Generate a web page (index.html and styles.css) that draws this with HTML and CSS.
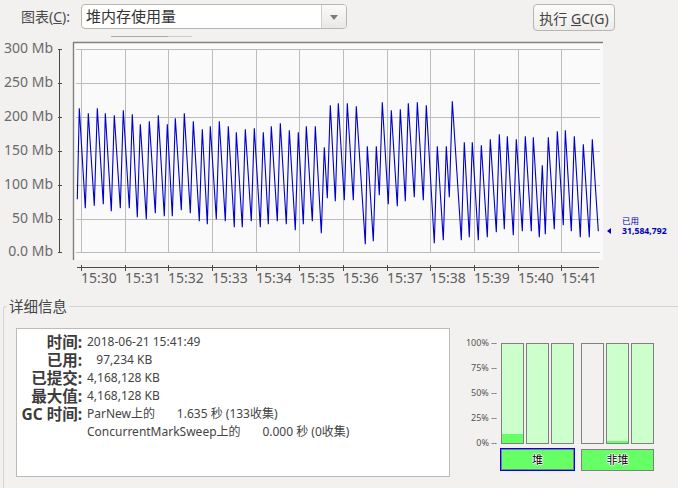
FILE: index.html
```html
<!DOCTYPE html>
<html lang="zh-CN">
<head>
    <meta charset="UTF-8">
    <title>堆内存使用量</title>
    <link rel="stylesheet" href="styles.css">
</head>
<body>
    <div class="toolbar">
        <label class="chart-label">图表(<u>C</u>):</label>
        <div class="combo">
            <span class="combo-text">堆内存使用量</span>
            <span class="combo-arrow"></span>
        </div>
        <button class="gc-button">执行 <u>G</u>C(G)</button>
    </div>

    <svg class="chart" width="678" height="262" viewBox="0 36 678 262">
        <line class="sep-dark" x1="111" y1="36.5" x2="168" y2="36.5"/>
        <line class="sep-light" x1="168" y1="36.5" x2="192" y2="36.5"/>

        <rect class="plot-bg" x="73" y="42" width="530" height="218"/>
        <path class="plot-edge" d="M73.5 70V42.5M73 42.5H603M73.5 42V260"/>

        <path class="grid" d="M76 49.5H600M76 83.5H600M76 117.5H600M76 151.5H600M76 185.5H600M76 219.5H600M76 252.5H600
            M81.5 49V253M125.5 49V253M168.5 49V253M212.5 49V253M256.5 49V253M299.5 49V253
            M343.5 49V253M387.5 49V253M430.5 49V253M474.5 49V253M518.5 49V253M561.5 49V253"/>

        <polyline class="series" points="77.3,199.3 79.3,108.3 85.3,208.3 88.3,113.3 94.3,205.7 97.3,108.3 103.3,204.3 105.3,113.3 111.3,211.3 114.3,115.3 120.3,208.3 123.3,110.3 129.3,208.3 132.3,114.3 137.3,217.3 140.3,124.3 146.3,219.3 149.3,121.3 155.3,213.3 158.3,115.3 164.3,216.3 167.3,124.3 172.3,216.3 175.3,118.3 181.3,210.3 184.3,113.3 190.3,213.3 193.3,121.3 199.3,221.3 202.3,129.3 207.3,224.3 210.3,126.3 216.3,219.3 219.3,121.3 225.3,221.3 228.3,126.3 234.3,227.3 236.3,132.3 242.3,227.3 245.3,129.3 251.3,221.3 254.3,128.3 260.3,227.3 263.3,132.3 268.3,224.3 271.3,126.3 277.3,221.3 280.3,123.3 286.3,224.3 289.3,130.3 295.3,230.3 298.3,132.3 303.3,224.3 306.3,126.3 312.3,221.3 315.3,126.3 321.3,233.3 324.3,147.3 327.3,198.3 330.3,105.3 335.3,201.3 338.3,103.3 344.3,200.3 347.3,103.3 353.3,200.3 356.3,106.3 365.3,244.3 367.3,146.3 373.3,241.3 376.3,146.3 379.3,195.3 382.3,102.3 388.3,204.3 391.3,110.3 397.3,206.3 400.3,109.3 405.3,201.3 408.3,103.3 414.3,197.3 417.3,102.3 423.3,200.3 426.3,105.3 434.3,243.3 437.3,146.3 443.3,240.3 446.3,146.3 449.3,197.3 452.3,101.3 461.3,240.3 464.3,142.3 469.3,237.3 472.3,142.3 478.3,240.3 481.3,145.3 487.3,237.3 490.3,139.3 496.3,232.3 499.3,134.3 504.3,229.3 507.3,136.3 513.3,235.3 516.3,139.3 522.3,231.3 525.3,136.3 531.3,231.3 533.3,137.3 539.3,237.3 542.3,165.3 545.3,234.3 548.3,137.3 554.3,229.3 557.3,131.3 563.3,225.3 565.3,130.3 571.3,231.3 574.3,136.3 580.3,237.3 583.3,144.3 589.3,237.3 592.3,139.3 598.3,231.3"/>

        <!-- y axis -->
        <path class="axis" d="M59.5 49V253M58 49.5H62M58 83.5H62M58 117.5H62M58 151.5H62M58 185.5H62M58 219.5H62M58 252.5H62"/>
        <g class="y-labels">
            <text x="53" y="53">300 Mb</text>
            <text x="53" y="87">250 Mb</text>
            <text x="53" y="121">200 Mb</text>
            <text x="53" y="155">150 Mb</text>
            <text x="53" y="189">100 Mb</text>
            <text x="53" y="223">50 Mb</text>
            <text x="53" y="256">0.0 Mb</text>
        </g>

        <!-- x axis -->
        <path class="axis" d="M77 267.5H599M81.5 265V271M125.5 265V271M168.5 265V271M212.5 265V271M256.5 265V271M299.5 265V271M343.5 265V271M387.5 265V271M430.5 265V271M474.5 265V271M518.5 265V271M561.5 265V271"/>
        <g class="x-labels">
            <text x="81" y="283">15:30</text>
            <text x="125" y="283">15:31</text>
            <text x="168" y="283">15:32</text>
            <text x="212" y="283">15:33</text>
            <text x="256" y="283">15:34</text>
            <text x="299" y="283">15:35</text>
            <text x="343" y="283">15:36</text>
            <text x="387" y="283">15:37</text>
            <text x="430" y="283">15:38</text>
            <text x="474" y="283">15:39</text>
            <text x="518" y="283">15:40</text>
            <text x="561" y="283">15:41</text>
        </g>

        <polygon class="marker" points="607,231 611,228 611,234"/>
        <text class="legend-name" x="622" y="224">已用</text>
        <text class="legend-value" x="622" y="234">31,584,792</text>
    </svg>

    <fieldset class="details">
        <legend>详细信息</legend>
        <div class="details-body">
            <div class="info-box">
                <div class="info-key">时间:</div><div class="info-val">2018-06-21 15:41:49</div>
                <div class="info-key">已用:</div><div class="info-val">&nbsp;&nbsp;&nbsp;97,234 KB</div>
                <div class="info-key">已提交:</div><div class="info-val">4,168,128 KB</div>
                <div class="info-key">最大值:</div><div class="info-val">4,168,128 KB</div>
                <div class="info-key">GC 时间:</div><div class="info-val">ParNew上的 &nbsp;&nbsp;&nbsp;&nbsp;&nbsp;&nbsp;1.635 秒 (133收集)</div>
                <div class="info-key"></div><div class="info-val">ConcurrentMarkSweep上的 &nbsp;&nbsp;&nbsp;&nbsp;&nbsp;&nbsp;0.000 秒 (0收集)</div>
            </div>

            <div class="pools">
                <div class="scale">
                    <span>100% --</span>
                    <span>75% --</span>
                    <span>50% --</span>
                    <span>25% --</span>
                    <span>0% --</span>
                </div>
                <div class="pool-group">
                    <div class="bars">
                        <div class="bar"><div class="bar-used" style="height: 9px"></div></div>
                        <div class="bar"></div>
                        <div class="bar"></div>
                    </div>
                    <div class="pool-button selected">堆</div>
                </div>
                <div class="pool-group">
                    <div class="bars">
                        <div class="bar empty"></div>
                        <div class="bar"><div class="bar-used" style="height: 2px"></div></div>
                        <div class="bar"></div>
                    </div>
                    <div class="pool-button">非堆</div>
                </div>
            </div>
        </div>
    </fieldset>
</body>
</html>
```

FILE: styles.css
```css
html, body {
    height: 488px;
    overflow: hidden;
}

body {
    margin: 0;
    background: #f2f1f0;
    color: #444;
    font-family: "Noto Sans", "Noto Sans CJK SC", sans-serif;
}

u {
    text-underline-offset: 1px;
}

.toolbar {
    display: flex;
    align-items: flex-start;
    height: 32px;
    padding: 4px 63px 0 21px;
}

.chart-label {
    width: 60px;
    line-height: 26px;
    font-size: 14px;
    color: #4c4c4c;
}

.combo {
    display: flex;
    width: 266px;
    height: 25px;
    box-sizing: border-box;
    background: #fff;
    border: 1px solid #b8b6b1;
    border-radius: 4px;
}

.combo-text {
    flex: 1;
    padding-left: 4px;
    line-height: 23px;
    font-size: 15px;
    color: #333;
}

.combo-arrow {
    position: relative;
    width: 24px;
    background: linear-gradient(#fbfafa, #e9e8e6);
    border-left: 1px solid #cfcdc9;
    border-radius: 0 3px 3px 0;
}

.combo-arrow::after {
    content: "";
    position: absolute;
    left: 8px;
    top: 10px;
    border-left: 4px solid transparent;
    border-right: 4px solid transparent;
    border-top: 5px solid #7a7a7a;
}

.gc-button {
    width: 82px;
    height: 27px;
    margin-left: auto;
    padding: 0;
    background: linear-gradient(#fbfbfa, #eeedeb);
    border: 1px solid #b8b6b1;
    border-radius: 4px;
    font-family: inherit;
    font-size: 14px;
    color: #444;
}

.chart {
    display: block;
}

.sep-dark {
    stroke: #a9a7a3;
}

.sep-light {
    stroke: #cfcdca;
}

.plot-bg {
    fill: #fafafa;
}

.plot-edge {
    fill: none;
    stroke: #808080;
    stroke-width: 1.4;
}

.grid {
    fill: none;
    stroke: #bcbcbc;
}

.series {
    fill: none;
    stroke: #0000c8;
    stroke-width: 1.1;
}

.axis {
    fill: none;
    stroke: #4a4a4a;
}

.y-labels text {
    font-size: 14px;
    text-anchor: end;
    fill: #6a6a6a;
}

.x-labels text {
    font-size: 14px;
    fill: #5e5e5e;
}

.marker {
    fill: #0000b4;
}

.legend-name {
    font-size: 8.5px;
    fill: #0000b4;
}

.legend-value {
    font-size: 8.7px;
    font-weight: 700;
    fill: #0000b4;
}

.details {
    height: 190px;
    margin: 0 0 0 3px;
    padding: 0 0 0 12px;
    border: 0;
    border-top: 1px solid #d6d4d0;
    border-left: 1px solid #d6d4d0;
    border-top-left-radius: 3px;
}

.details legend {
    margin-left: -9px;
    padding: 0 2px;
    font-size: 14.5px;
    line-height: 16px;
    color: #444;
}

.details-body {
    display: flex;
    padding-top: 14px;
}

.info-box {
    display: grid;
    grid-template-columns: 65px 1fr;
    grid-auto-rows: 18px;
    align-content: start;
    column-gap: 5px;
    width: 434px;
    height: 149px;
    box-sizing: border-box;
    padding-top: 4px;
    background: #fff;
    border: 1px solid #bdbbb6;
    line-height: 18px;
}

.info-key {
    font-size: 15.5px;
    font-weight: 700;
    text-align: right;
    white-space: nowrap;
    color: #3c3c3c;
}

.info-val {
    font-size: 12px;
    white-space: nowrap;
    color: #444;
}

.pools {
    display: flex;
    align-items: flex-start;
    padding-top: 15px;
}

.scale {
    display: flex;
    flex-direction: column;
    align-items: flex-end;
    justify-content: space-between;
    width: 47px;
    height: 110px;
    margin-top: -5px;
    font-size: 9px;
    line-height: 10px;
    color: #555;
}

.pool-group {
    display: flex;
    flex-direction: column;
    margin-left: 4px;
}

.pool-group + .pool-group {
    margin-left: 6px;
}

.bars {
    display: flex;
    gap: 2px;
}

.bar {
    display: flex;
    align-items: flex-end;
    width: 23px;
    height: 101px;
    box-sizing: border-box;
    background: #ccffcc;
    border: 1px solid #808080;
}

.bar.empty {
    background: transparent;
}

.bar-used {
    width: 100%;
    background: #66ff66;
}

.pool-button {
    width: 73px;
    height: 22px;
    margin-top: 5px;
    box-sizing: border-box;
    background: #66ff66;
    border: 1px solid #808080;
    text-align: center;
    font-size: 11px;
    line-height: 20px;
    color: #000;
    text-shadow: 1px 0 #fff, -1px 0 #fff, 0 1px #fff, 0 -1px #fff;
}

.pool-button.selected {
    width: 75px;
    height: 23px;
    margin: 4px 0 0 -1px;
    border-color: #0000ff;
    box-shadow: inset 0 0 0 1px #808080;
    line-height: 21px;
}
```
